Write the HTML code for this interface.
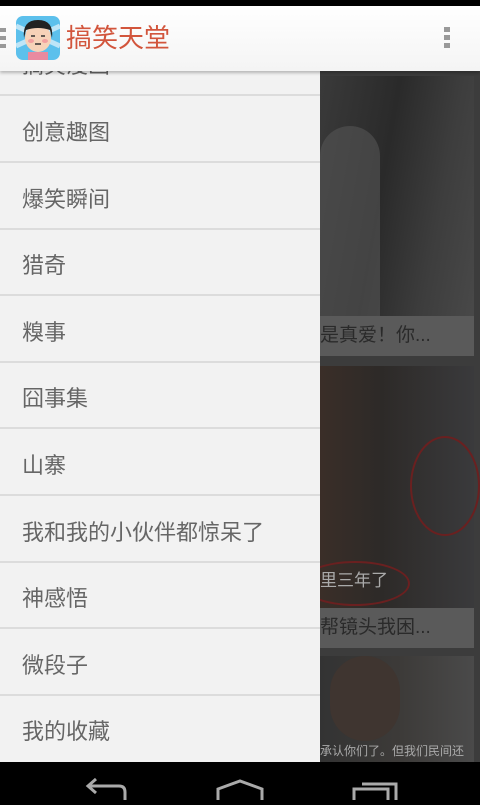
<!DOCTYPE html>
<html><head><meta charset="utf-8"><style>
*{margin:0;padding:0;box-sizing:border-box}
body{width:480px;height:800px;overflow:hidden;background:#000;font-family:"Liberation Sans","Noto Sans CJK SC",sans-serif;position:relative}
.abs{position:absolute}
#bar{left:0;top:6px;width:480px;height:65px;background:linear-gradient(#fff,#f4f4f4);box-shadow:0 2px 3px rgba(0,0,0,.25);z-index:5}
#title{left:66px;top:17px;font-size:26px;color:#d2553c;line-height:30px}
#content{left:320px;top:71px;width:160px;height:691px;background:#3c3c3c;overflow:hidden}
.card{position:absolute;left:0;width:154px;background:#555}
.cap{position:absolute;left:0;bottom:0;width:154px;height:40px;background:#5a5a5a;color:#2a2a2a;font-size:19px;line-height:40px;white-space:nowrap;overflow:hidden}
#drawer{left:0;top:71px;width:320px;height:691px;background:#f2f2f2;overflow:hidden}
.it{position:absolute;left:0;width:320px;height:67px;border-bottom:2px solid #dcdcdc;font-size:22px;color:#666;padding-left:22px;line-height:73px}
#nav{left:0;top:762px;width:480px;height:38px;background:#000}
</style></head><body>
<div class="abs" id="bar">
 <div class="abs" style="left:0;top:22px;width:6px;height:4px;background:#999"></div>
 <div class="abs" style="left:0;top:30px;width:6px;height:4px;background:#999"></div>
 <div class="abs" style="left:0;top:38px;width:6px;height:4px;background:#999"></div>
 <svg class="abs" style="left:16px;top:10px" width="44" height="44" viewBox="0 0 44 44">
  <rect width="44" height="44" rx="7" fill="#5cc0ec"/>
  <path d="M0 10L44 30M0 30L44 10" stroke="#fff" stroke-width="5" opacity=".6"/>
  <ellipse cx="22" cy="22" rx="13" ry="14" fill="#f6d2b8"/>
  <path d="M8 22Q6 4 22 4Q38 4 36 22L34 14Q22 10 10 14Z" fill="#222"/>
  <rect x="12" y="36" width="20" height="8" fill="#e98aa0"/>
  <ellipse cx="15" cy="25" rx="3" ry="2" fill="#f2a0a0"/><ellipse cx="29" cy="25" rx="3" ry="2" fill="#f2a0a0"/>
  <path d="M15 20h4M25 20h4M19 28h6" stroke="#333" stroke-width="1.5"/>
 </svg>
 <div class="abs" id="title">搞笑天堂</div>
 <div class="abs" style="left:444px;top:21px;width:6px;height:5px;background:#999"></div>
 <div class="abs" style="left:444px;top:29px;width:6px;height:5px;background:#999"></div>
 <div class="abs" style="left:444px;top:37px;width:6px;height:5px;background:#999"></div>
</div>
<div class="abs" style="left:0;top:0;width:480px;height:6px;background:#000"></div>
<div class="abs" id="content">
 <div class="card" style="top:5px;height:280px;background:linear-gradient(100deg,#3a3a3a,#2a2a2a 40%,#3d3d3d 70%,#4a4a4a)">
  <div class="abs" style="left:0;top:50px;width:60px;height:190px;background:#555;border-radius:30px 30px 0 0;opacity:.6"></div>
  <div class="cap" style="left:0">是真爱！你...</div></div>
 <div class="card" style="top:295px;height:282px;background:linear-gradient(90deg,#3a2e28,#2d2a28 40%,#3a3a3c)">
  <div class="abs" style="left:90px;top:70px;width:70px;height:100px;border:2px solid #6a2020;border-radius:50%"></div>
  <div class="abs" style="left:-20px;top:195px;width:110px;height:45px;border:2px solid #6a2020;border-radius:50%"></div>
  <div class="abs" style="left:0;top:200px;color:#aaa;font-size:17px">里三年了</div>
  <div class="cap">帮镜头我困...</div></div>
 <div class="card" style="top:585px;height:110px;background:linear-gradient(90deg,#333,#3c3a38 50%,#4a4a4a)">
  <div class="abs" style="left:10px;top:0;width:70px;height:85px;background:#3f3530;border-radius:35px"></div>
  <div class="abs" style="left:0;top:86px;color:#aaa;font-size:12px;white-space:nowrap">承认你们了。但我们民间还</div></div>
</div>
<div class="abs" id="drawer">
 <div class="it" style="top:-42px">搞笑漫画</div>
 <div class="it" style="top:25px">创意趣图</div>
 <div class="it" style="top:91.6px">爆笑瞬间</div>
 <div class="it" style="top:158.2px">猎奇</div>
 <div class="it" style="top:224.8px">糗事</div>
 <div class="it" style="top:291.4px">囧事集</div>
 <div class="it" style="top:358px">山寨</div>
 <div class="it" style="top:424.6px">我和我的小伙伴都惊呆了</div>
 <div class="it" style="top:491.2px">神感悟</div>
 <div class="it" style="top:557.8px">微段子</div>
 <div class="it" style="top:624.4px;border:none">我的收藏</div>
</div>
<div class="abs" id="nav">
 <svg width="480" height="38"><g fill="none" stroke="#aaa" stroke-width="3">
  <path d="M125 38V30Q125 24 119 24H88M96 17L88 24L96 31"/>
  <path d="M218 38V27L240 19L262 27V38"/>
  <path d="M354 38V27H388V38M362 22H396V38"/>
 </g></svg>
</div>
</body></html>
